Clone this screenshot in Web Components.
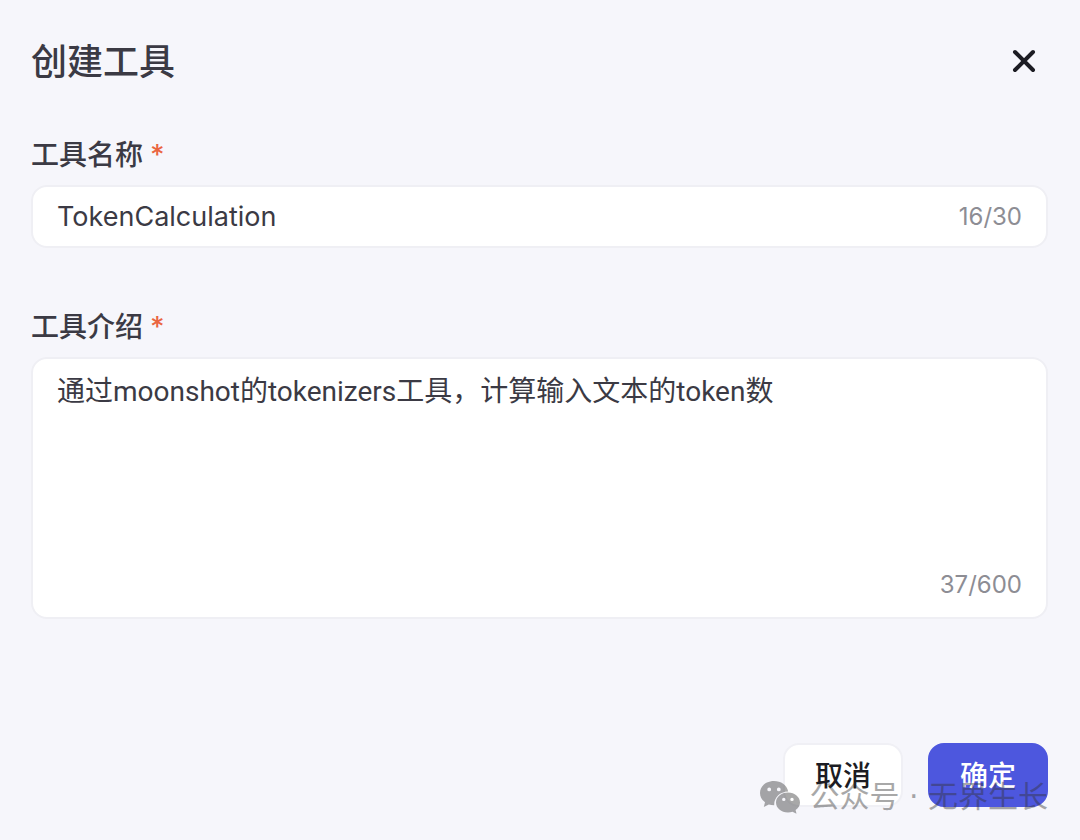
<!DOCTYPE html>
<html lang="zh-CN">
<head>
<meta charset="utf-8">
<meta name="viewport" content="width=device-width, initial-scale=1">
<title>创建工具</title>
<style>
  body {
    margin: 0;
    min-height: 100vh;
    background: #f6f6fb;
    color: #3b3a44;
    font-family: Inter, "Noto Sans CJK SC", sans-serif;
  }
</style>
</head>
<body>
<tool-dialog heading="创建工具">
  <text-field label="工具名称" maxlength="30" value="TokenCalculation"></text-field>
  <text-field label="工具介绍" maxlength="600" multiline value="通过moonshot的tokenizers工具，计算输入文本的token数"></text-field>
  <action-button slot="actions">取消</action-button>
  <action-button slot="actions" primary>确定</action-button>
  <account-mark slot="mark">公众号 · 无界生长</account-mark>
</tool-dialog>

<script>
class ToolDialog extends HTMLElement {
  connectedCallback() {
    const root = this.attachShadow({ mode: "open" });
    root.innerHTML = `
      <style>
        :host { display: block; position: relative; padding: 32px 32px 33px 31px; }
        header { display: flex; justify-content: space-between; align-items: center; height: 60px; }
        h1 { margin: 0; font-size: 36px; line-height: 60px; font-weight: 500; }
        .close { display: flex; padding: 8px; margin: 0; border: 0; background: none; cursor: pointer; }
        .close svg { width: 32px; height: 32px; }
        .fields { display: grid; gap: 56px; padding-top: 40px; }
        footer { display: flex; justify-content: flex-end; gap: 25px; padding-top: 124px; }
        .mark { position: absolute; right: 32px; bottom: 23px; pointer-events: none; }
      </style>
      <header>
        <h1></h1>
        <button class="close" type="button" aria-label="关闭">
          <svg viewBox="0 0 32 32" fill="none" stroke="#1c1c23" stroke-width="4" stroke-linecap="round"><path d="M7 6l18 18M25 6L7 24"/></svg>
        </button>
      </header>
      <div class="fields"><slot></slot></div>
      <footer><slot name="actions"></slot></footer>
      <div class="mark"><slot name="mark"></slot></div>`;
    root.querySelector("h1").textContent = this.getAttribute("heading");
  }
}

class TextField extends HTMLElement {
  connectedCallback() {
    const multiline = this.hasAttribute("multiline");
    const root = this.attachShadow({ mode: "open" });
    root.innerHTML = `
      <style>
        :host { display: block; }
        label { display: block; height: 53px; font-size: 28px; line-height: 46px; font-weight: 500; }
        .star { color: #ea6540; margin-left: 7px; }
        .box { display: flex; align-items: center; box-sizing: border-box; min-height: 63px; padding: 0 24px;
               background: #fff; border: 2px solid #efeff4; border-radius: 16px; }
        .box.multi { flex-direction: column; align-items: stretch; min-height: 262px; padding: 11px 24px 10px; }
        .box:focus-within { border-color: #4d57de; }
        input, textarea { flex: 1; min-width: 0; margin: 0; padding: 0; border: 0; outline: 0; background: none;
               color: inherit; font: inherit; font-size: 27px; line-height: 44px; resize: none; }
        textarea { font-family: Roboto, "Noto Sans CJK SC", sans-serif; font-size: 28px; }
        .count { color: #8d8d94; font-size: 24px; line-height: 44px; text-align: right; }
      </style>
      <label for="control"><span class="name"></span><span class="star">*</span></label>
      <div class="box ${multiline ? "multi" : ""}">
        ${multiline ? '<textarea id="control" required></textarea>' : '<input id="control" type="text" required>'}
        <span class="count"></span>
      </div>`;
    const control = root.getElementById("control");
    const count = root.querySelector(".count");
    const max = Number(this.getAttribute("maxlength"));
    root.querySelector(".name").textContent = this.getAttribute("label");
    control.spellcheck = false;
    control.maxLength = max;
    control.value = this.getAttribute("value") || "";
    const update = () => { count.textContent = control.value.length + "/" + max; };
    control.addEventListener("input", update);
    update();
  }
}

class ActionButton extends HTMLElement {
  connectedCallback() {
    this.attachShadow({ mode: "open" }).innerHTML = `
      <style>
        :host { display: block; }
        button { display: block; box-sizing: border-box; height: 64px; margin: 0; padding: 2px 30px 0;
                 border: 2px solid #f0f0f5; border-radius: 16px; background: #fff; color: #1c1c23;
                 font: inherit; font-size: 28px; line-height: 58px; font-weight: 500; cursor: pointer; }
        :host([primary]) button { background: #4d57de; border-color: #4d57de; color: #fff; }
      </style>
      <button type="button"><slot></slot></button>`;
  }
}

class AccountMark extends HTMLElement {
  connectedCallback() {
    this.attachShadow({ mode: "open" }).innerHTML = `
      <style>
        :host { display: flex; align-items: center; gap: 8px; opacity: .42; color: #333; font-size: 30px; line-height: 40px; white-space: nowrap;
                font-family: "DejaVu Sans", "Noto Sans CJK SC", sans-serif; }
        svg { width: 42px; height: 34px; }
      </style>
      <svg viewBox="0 0 42 34" aria-hidden="true">
        <path fill="#333" fill-rule="evenodd" d="M15 1C7 1 1 6.200 1 13c0 3.800 2 7 5 9.200L4.800 27l5-2.500c1.600.5 3.300.7 5.400.7-.3-7.500 5.300-13.600 14-13.800C27.800 5 22 1 15 1zM10.200 7.500a1.900 1.900 0 1 1 0 3.800 1.900 1.900 0 0 1 0-3.800zM19.800 7.500a1.900 1.900 0 1 1 0 3.800 1.900 1.900 0 0 1 0-3.800z"/>
        <path fill="#333" fill-rule="evenodd" d="M29 12.500c-6.800 0-12 4.500-12 10s5.200 10 12 10c1.700 0 3.100-.2 4.500-.7l4 2-.9-3.800c2.700-1.800 4.400-4.500 4.400-7.500 0-5.500-5.200-10-12-10zM24.800 17.700a1.700 1.700 0 1 1 0 3.400 1.700 1.700 0 0 1 0-3.400zM33 17.700a1.700 1.700 0 1 1 0 3.400 1.700 1.700 0 0 1 0-3.400z"/>
      </svg>
      <span><slot></slot></span>`;
  }
}

customElements.define("text-field", TextField);
customElements.define("action-button", ActionButton);
customElements.define("account-mark", AccountMark);
customElements.define("tool-dialog", ToolDialog);
</script>
</body>
</html>
